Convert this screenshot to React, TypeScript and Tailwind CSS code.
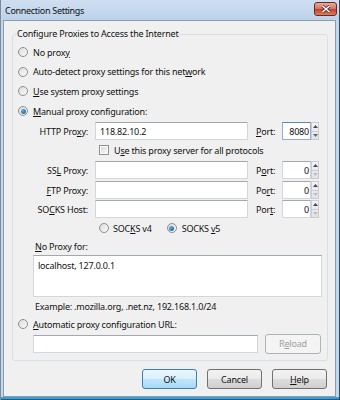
import React from "react";

function Radio({ checked = false }: { checked?: boolean }) {
  return (
    <span className="w-[10px] h-[10px] shrink-0 rounded-full border border-[#8c8f93] bg-gradient-to-br from-[#dcdcdc] to-[#fbfbfb] flex items-center justify-center">
      {checked && (
        <span className="w-[5px] h-[5px] rounded-full bg-[radial-gradient(circle_at_35%_35%,#5fb1e8,#12497e)]" />
      )}
    </span>
  );
}

function Checkbox() {
  return (
    <span className="w-[10px] h-[10px] shrink-0 border border-[#8e8f8f] bg-white p-[1px] flex">
      <span className="flex-1 bg-gradient-to-br from-[#dadada] to-[#f6f6f6]" />
    </span>
  );
}

function Spinner({ canDown }: { canDown: boolean }) {
  return (
    <div className="w-[8px] h-[18px] flex flex-col border border-[#c9cdd2] bg-gradient-to-b from-[#f4f4f4] to-[#e2e2e2]">
      <div className="flex-1 flex items-center justify-center border-b border-[#c9cdd2]">
        <svg width="5" height="3" viewBox="0 0 5 3">
          <path d="M0 3 L2.5 0 L5 3 Z" fill="#3d4b5c" />
        </svg>
      </div>
      <div className="flex-1 flex items-center justify-center">
        <svg width="5" height="3" viewBox="0 0 5 3">
          <path d="M0 0 L2.5 3 L5 0 Z" fill={canDown ? "#5b6878" : "#b9bdc2"} />
        </svg>
      </div>
    </div>
  );
}

function TextBox({ value = "", className = "", focus = false }: { value?: string; className?: string; focus?: boolean }) {
  return (
    <div
      className={`h-[18px] bg-white border flex items-center ${
        focus ? "border-[#8fb0d6] border-t-[#5d87b8]" : "border-[#d3d7dd] border-t-[#a3a8b0]"
      } ${className}`}
    >
      {value}
    </div>
  );
}

function ProxyRow({ label, port, value = "", focus = false, mt }: { label: React.ReactNode; port: React.ReactNode; value?: string; focus?: boolean; mt: string }) {
  return (
    <div className={`flex items-center h-[18px] ${mt}`}>
      <div className="w-[75px] text-right">{label}</div>
      <TextBox value={value} className="ml-[7px] w-[153px] pl-[4px]" />
      <div className="ml-[8px] w-[26px]">{port}</div>
      <TextBox value={value ? "8080" : "0"} focus={focus} className="w-[29px] justify-end pr-[1px]" />
      <Spinner canDown={!!value} />
    </div>
  );
}

function Button({ children, primary = false, disabled = false, className = "" }: { children: React.ReactNode; primary?: boolean; disabled?: boolean; className?: string }) {
  return (
    <div
      className={`h-[20px] rounded-[3px] border flex items-center justify-center ${
        primary
          ? "border-[#3c7fb1] bg-[linear-gradient(#eaf6fd_0%,#d9f0fc_50%,#bee6fd_51%,#a7d9f5_100%)]"
          : disabled
          ? "border-[#adb2b5] bg-[#f4f4f4] text-[#a0a0a0]"
          : "border-[#707070] bg-[linear-gradient(#f2f2f2_0%,#ebebeb_50%,#dddddd_51%,#cfcfcf_100%)]"
      } ${className}`}
    >
      {children}
    </div>
  );
}

export default function App() {
  return (
    <div className="w-[340px] h-[400px] flex flex-col bg-[#c2d6ec] border-l border-[#7d8a98] border-r border-r-[#2d4c6e] font-['Noto_Sans',sans-serif] text-[9px] tracking-[-0.2px] leading-none text-[#111]">
      <div className="h-[20px] shrink-0 flex items-center justify-between pl-[4px] pr-[2px] bg-[linear-gradient(#cfdff1,#bcd2ea)]">
        <span className="text-[9px] tracking-[-0.3px]">Connection Settings</span>
        <div className="w-[23px] h-[14px] mt-[-2px] rounded-[3px] border border-[#6b2a20] bg-[linear-gradient(#e9a99b_0%,#d47767_45%,#c1432f_55%,#d9805f_100%)] flex items-center justify-center">
          <svg width="10" height="8" viewBox="0 0 10 8">
            <path d="M1.5 1 L8.5 7 M8.5 1 L1.5 7" stroke="#5a2a25" strokeWidth="3" />
            <path d="M1.5 1 L8.5 7 M8.5 1 L1.5 7" stroke="#ffffff" strokeWidth="1.6" />
          </svg>
        </div>
      </div>

      <div className="flex-1 ml-[2px] mr-[3px] bg-[#f0f0f0] border border-[#8d9cae] flex flex-col">
        <fieldset className="ml-[8px] mt-[6px] w-[316px] border border-[#d5dfe5] rounded-[3px] pb-[7px]">
          <legend className="ml-[3px] px-[1px] leading-[14px]">Configure Proxies to Access the Internet</legend>

          <div className="pt-[1px] pl-[5px] flex flex-col">
            <div className="h-[20px] flex items-center gap-[5px]">
              <Radio />
              <span>No prox<u className="underline-offset-1">y</u></span>
            </div>
            <div className="h-[19px] flex items-center gap-[5px]">
              <Radio />
              <span>Auto-detect proxy settings for this net<u className="underline-offset-1">w</u>ork</span>
            </div>
            <div className="h-[20px] flex items-center gap-[5px]">
              <Radio />
              <span><u className="underline-offset-1">U</u>se system proxy settings</span>
            </div>
            <div className="h-[20px] flex items-center gap-[5px]">
              <Radio checked />
              <span><u className="underline-offset-1">M</u>anual proxy configuration:</span>
            </div>
          </div>

          <div className="flex flex-col">
            <ProxyRow
              mt="mt-[1px]"
              label={<>HTTP Pro<u className="underline-offset-1">x</u>y:</>}
              port={<><u className="underline-offset-1">P</u>ort:</>}
              value="118.82.10.2"
              focus
            />
            <div className="h-[20px] flex items-center gap-[5px] pl-[86px]">
              <Checkbox />
              <span>U<u className="underline-offset-1">s</u>e this proxy server for all protocols</span>
            </div>
            <ProxyRow
              mt="mt-[1px]"
              label={<>SS<u className="underline-offset-1">L</u> Proxy:</>}
              port={<>P<u className="underline-offset-1">o</u>rt:</>}
            />
            <ProxyRow
              mt="mt-[2px]"
              label={<><u className="underline-offset-1">F</u>TP Proxy:</>}
              port={<>Po<u className="underline-offset-1">r</u>t:</>}
            />
            <ProxyRow
              mt="mt-[1px]"
              label={<>SO<u className="underline-offset-1">C</u>KS Host:</>}
              port={<>Por<u className="underline-offset-1">t</u>:</>}
            />
            <div className="h-[20px] flex items-center pl-[86px]">
              <Radio />
              <span className="ml-[4px]">SOC<u className="underline-offset-1">K</u>S v4</span>
              <span className="ml-[15px]"><Radio checked /></span>
              <span className="ml-[5px]">SOCKS <u className="underline-offset-1">v</u>5</span>
            </div>
          </div>

          <div className="flex flex-col pl-[20px]">
            <div className="h-[17px] flex items-center pl-[2px]">
              <span><u className="underline-offset-1">N</u>o Proxy for:</span>
            </div>
            <div className="w-[289px] h-[42px] bg-white border border-[#d3d7dd] border-t-[#a3a8b0] pl-[4px] pt-[5px]">
              localhost, 127.0.0.1
            </div>
            <div className="h-[18px] flex items-center pl-[2px]">
              Example: .mozilla.org, .net.nz, 192.168.1.0/24
            </div>
          </div>

          <div className="pl-[5px] h-[18px] flex items-center gap-[5px]">
            <Radio />
            <span><u className="underline-offset-1">A</u>utomatic proxy configuration URL:</span>
          </div>
          <div className="flex items-center pl-[20px] mt-[1px] h-[19px]">
            <TextBox className="w-[225px]" />
            <Button disabled className="ml-[7px] w-[56px]">
              R<u className="underline-offset-1">e</u>load
            </Button>
          </div>
        </fieldset>

        <div className="flex justify-end gap-[10px] mt-[8px] pr-[8px]">
          <Button primary className="w-[55px]">OK</Button>
          <Button className="w-[55px]">Cancel</Button>
          <Button className="w-[55px]"><u className="underline-offset-1">H</u>elp</Button>
        </div>
      </div>
      <div className="h-[3px] shrink-0 bg-[#3a9ed6] border-b border-[#1d5d86]" />
    </div>
  );
}
